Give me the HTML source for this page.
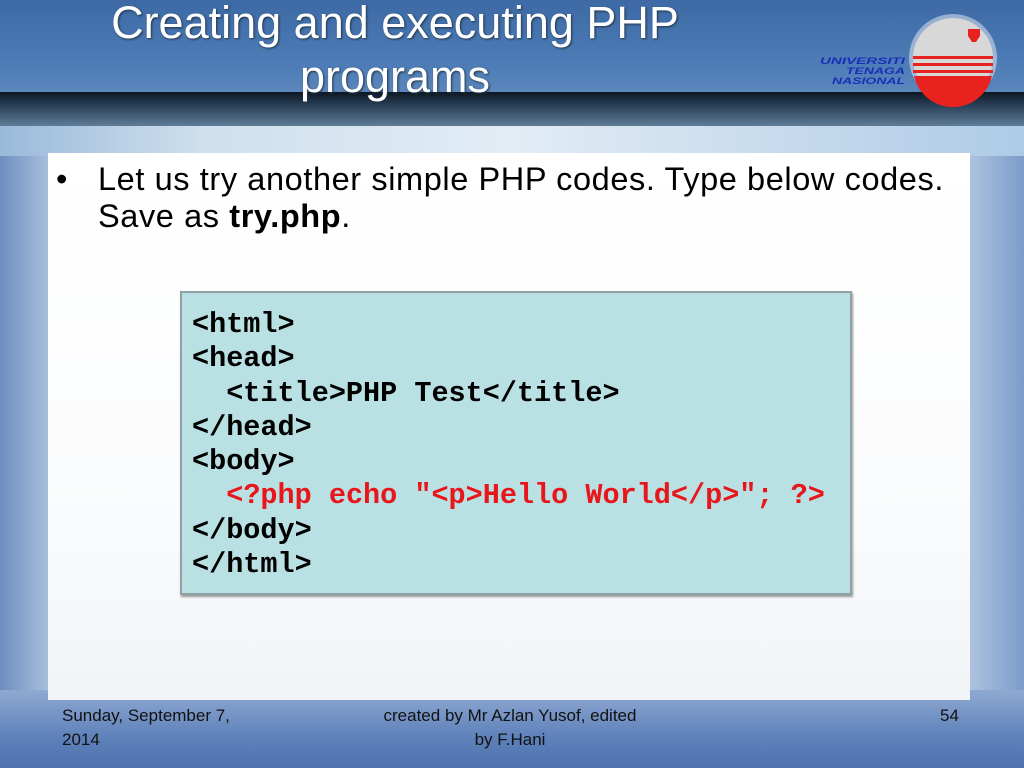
<!DOCTYPE html>
<html><head><meta charset="utf-8"><style>
body{margin:0;width:1024px;height:768px;overflow:hidden;position:relative;font-family:"Liberation Sans",sans-serif;
background:linear-gradient(90deg,#6d8fc0 0%,#b9cbe2 6%,#dfe8f2 20%,#e8eef5 60%,#c8d6e8 92%,#7c9ccb 100%);}
#bot{position:absolute;left:0;top:690px;width:1024px;height:78px;background:linear-gradient(180deg,#8fa9d1,#5f82bb 60%,#4d72ad);}
#hdr{position:absolute;left:0;top:0;width:1024px;height:92px;background:linear-gradient(180deg,#3d6aa5,#4d7cb6 70%,#5a86bb);}
#dk{position:absolute;left:0;top:92px;width:1024px;height:34px;background:linear-gradient(180deg,#0c1722,#2a4158 40%,#5f7c97);}
#lt{position:absolute;left:0;top:126px;width:1024px;height:30px;background:linear-gradient(90deg,#9ab9da,#cfe0ee 20%,#e2ecf5 50%,#aecbe6 100%);}
h1{position:absolute;left:20px;top:-4px;width:750px;margin:0;text-align:center;color:#fff;font-weight:normal;font-size:45px;line-height:54px;text-shadow:1px 1px 2px #234;}
#panel{position:absolute;left:48px;top:153px;width:922px;height:547px;background:linear-gradient(180deg,#fff 0%,#fbfcfd 60%,#f1f4f8);}
#txt{position:absolute;left:56px;top:161px;font-size:32.5px;line-height:37px;color:#000;}
#code{position:absolute;left:180px;top:291px;width:668px;height:300px;background:#b9e0e3;border:2px solid #8fa2a6;box-shadow:1px 2px 2px #999;}
pre{margin:0;position:absolute;left:10px;top:15px;font-family:"Liberation Mono",monospace;font-weight:bold;font-size:28.5px;line-height:34.3px;color:#000;}
.r{color:#e8161a}
.f{position:absolute;font-size:17px;color:#111;line-height:24px;}
</style></head><body>
<div id="bot"></div>
<div id="hdr"></div><div id="dk"></div><div id="lt"></div>
<h1>Creating and executing PHP<br>programs</h1>
<svg style="position:absolute;left:810px;top:0" width="214" height="110">
<circle cx="143" cy="58" r="44" fill="#fff" opacity=".45"/>
<circle cx="143" cy="58" r="40" fill="#d8d8d8"/>
<path d="M104 76 A40 40 0 0 0 182 76 Z" fill="#e8231f"/>
<rect x="103" y="56" width="80" height="3" fill="#e8231f"/><rect x="103" y="63" width="80" height="3" fill="#e8231f"/><rect x="103" y="70" width="80" height="3" fill="#e8231f"/>
<path d="M158 29h12v7l-4 6h-4l-4-6z" fill="#e8231f"/>
<text x="10" y="64" textLength="85" lengthAdjust="spacingAndGlyphs" font-family="Liberation Sans" font-weight="bold" font-style="italic" font-size="9" fill="#1a2fb8">UNIVERSITI</text>
<text x="36" y="74" textLength="59" lengthAdjust="spacingAndGlyphs" font-family="Liberation Sans" font-weight="bold" font-style="italic" font-size="9" fill="#1a2fb8">TENAGA</text>
<text x="22" y="84" textLength="73" lengthAdjust="spacingAndGlyphs" font-family="Liberation Sans" font-weight="bold" font-style="italic" font-size="9" fill="#1a2fb8">NASIONAL</text>
</svg>
<div id="panel"></div>
<div id="txt"><span style="position:absolute;left:0">•</span><div style="margin-left:42px;width:866px;letter-spacing:0.6px">Let us try another simple PHP codes. Type below codes. Save as <b>try.php</b>.</div></div>
<div id="code"><pre>&lt;html&gt;
&lt;head&gt;
  &lt;title&gt;PHP Test&lt;/title&gt;
&lt;/head&gt;
&lt;body&gt;
  <span class="r">&lt;?php echo "&lt;p&gt;Hello World&lt;/p&gt;"; ?&gt;</span>
&lt;/body&gt;
&lt;/html&gt;</pre></div>
<div class="f" style="left:62px;top:704px">Sunday, September 7,<br>2014</div>
<div class="f" style="left:350px;top:704px;width:320px;text-align:center">created by Mr Azlan Yusof, edited<br>by F.Hani</div>
<div class="f" style="left:940px;top:704px">54</div>
</body></html>
